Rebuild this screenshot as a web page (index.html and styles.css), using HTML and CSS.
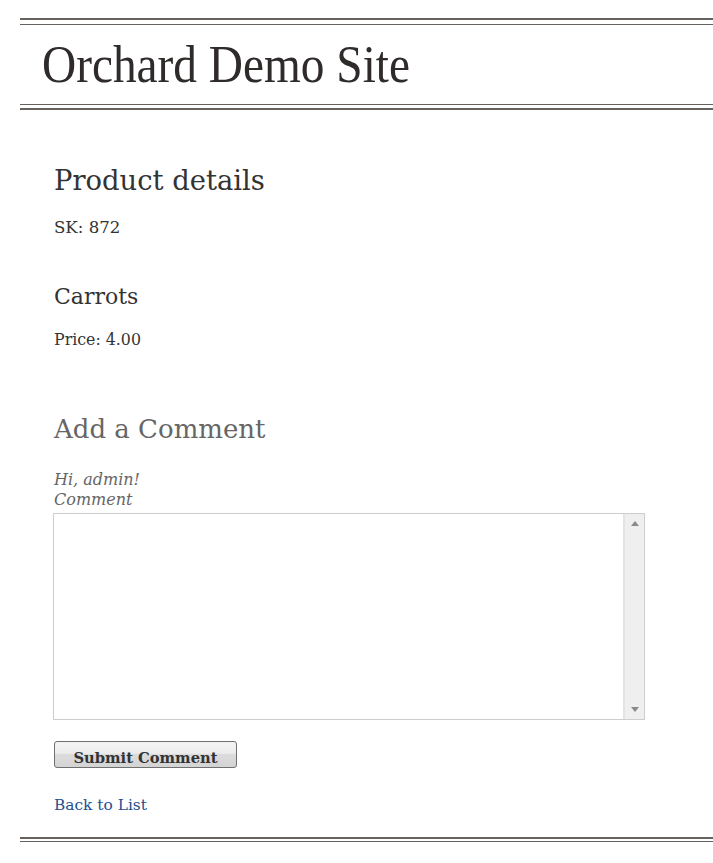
FILE: index.html
```html
<!DOCTYPE html>
<html lang="en">
<head>
<meta charset="utf-8">
<title>Orchard Demo Site</title>
<link rel="stylesheet" href="styles.css">
</head>
<body>
<div class="page">
  <header class="site-header">
    <div class="site-header-inner">
      <h1 class="site-title">Orchard Demo Site</h1>
    </div>
  </header>
  <main class="content">
    <h2 class="title">Product details</h2>
    <p class="line sku">SK: 872</p>
    <h3 class="product-name">Carrots</h3>
    <p class="line price">Price: 4.00</p>
    <h2 class="title comment-title">Add a Comment</h2>
    <div class="greeting">Hi, admin!</div>
    <label class="label" for="comment">Comment</label>
    <div class="field">
      <textarea id="comment" class="textarea"></textarea>
      <div class="scrollbar">
        <span class="arrow arrow-up"></span>
        <span class="arrow arrow-down"></span>
      </div>
    </div>
    <button class="button" type="button">Submit Comment</button>
    <a class="back" href="#">Back to List</a>
  </main>
  <footer class="site-footer"><div class="site-footer-inner"></div></footer>
</div>
</body>
</html>
```
FILE: styles.css
```css
html, body {
  margin: 0;
  padding: 0;
  background: #fff;
}
body {
  font-family: "DejaVu Serif", Georgia, serif;
  color: #333;
  overflow: hidden;
}
.page {
  margin: 18px 0 0 20px;
}
.site-header {
  border-top: 2px solid #68625e;
  border-bottom: 2px solid #68625e;
  padding: 4px 0 3px;
}
.site-header-inner {
  border-top: 1px solid #68625e;
  border-bottom: 1px solid #68625e;
  height: 79px;
  padding-left: 22px;
}
.site-title {
  margin: 0;
  display: inline-block;
  font-family: "Liberation Serif", "Times New Roman", serif;
  font-weight: normal;
  font-size: 52px;
  line-height: 79px;
  color: #2e2b2a;
  transform: scaleX(0.91);
  transform-origin: left center;
}
.content {
  padding: 54px 0 0 34px;
  display: flex;
  flex-direction: column;
  align-items: flex-start;
}
.title {
  margin: 0;
  font-weight: normal;
  font-size: 27.4px;
  line-height: 33px;
  color: #333;
}
.line {
  margin: 0;
  font-size: 16px;
  line-height: 20px;
}
.sku {
  margin-top: 21px;
  font-size: 16.6px;
}
.product-name {
  margin: 45px 0 0;
  font-weight: normal;
  font-size: 22px;
  line-height: 28px;
}
.price {
  margin-top: 19px;
  font-size: 15.8px;
}
.comment-title {
  margin-top: 63px;
  font-size: 26px;
  color: #666;
}
.greeting {
  margin-top: 24px;
  font-style: italic;
  font-size: 16px;
  line-height: 20px;
  color: #666;
}
.label {
  font-style: italic;
  font-size: 16px;
  line-height: 20px;
  color: #666;
}
.field {
  margin: 3px 0 0 -1px;
  width: 590px;
  height: 205px;
  border: 1px solid #cdcdcd;
  display: flex;
}
.textarea {
  flex: 1;
  border: 0;
  margin: 0;
  padding: 2px;
  resize: none;
  outline: none;
  font-family: "DejaVu Serif", serif;
  font-size: 14px;
  overflow: hidden;
}
.scrollbar {
  width: 19px;
  background: #efefef;
  border-left: 2px solid #e4e4e4;
  display: flex;
  flex-direction: column;
  justify-content: space-between;
  align-items: center;
  padding: 7px 0 7px;
}
.arrow {
  width: 0;
  height: 0;
  border-left: 4px solid transparent;
  border-right: 4px solid transparent;
}
.arrow-up {
  border-bottom: 5px solid #8a8a8a;
}
.arrow-down {
  border-top: 5px solid #8a8a8a;
}
.button {
  margin-top: 21px;
  width: 183px;
  height: 27px;
  border: 1px solid #707070;
  border-radius: 3px;
  background: linear-gradient(#f4f4f4 0%, #ececec 45%, #dcdcdc 50%, #d4d4d4 100%);
  font-family: "DejaVu Serif", serif;
  font-weight: bold;
  font-size: 14.7px;
  line-height: 27px;
  color: #333;
  padding: 2px 0 0;
  text-align: center;
}
.back {
  margin-top: 27px;
  font-size: 15.4px;
  line-height: 20px;
  color: #1e4f8f;
  text-decoration: none;
}
.site-footer {
  margin-top: 22px;
  border-top: 2px solid #68625e;
  padding-top: 2px;
}
.site-footer-inner {
  border-top: 1px solid #68625e;
}
```
